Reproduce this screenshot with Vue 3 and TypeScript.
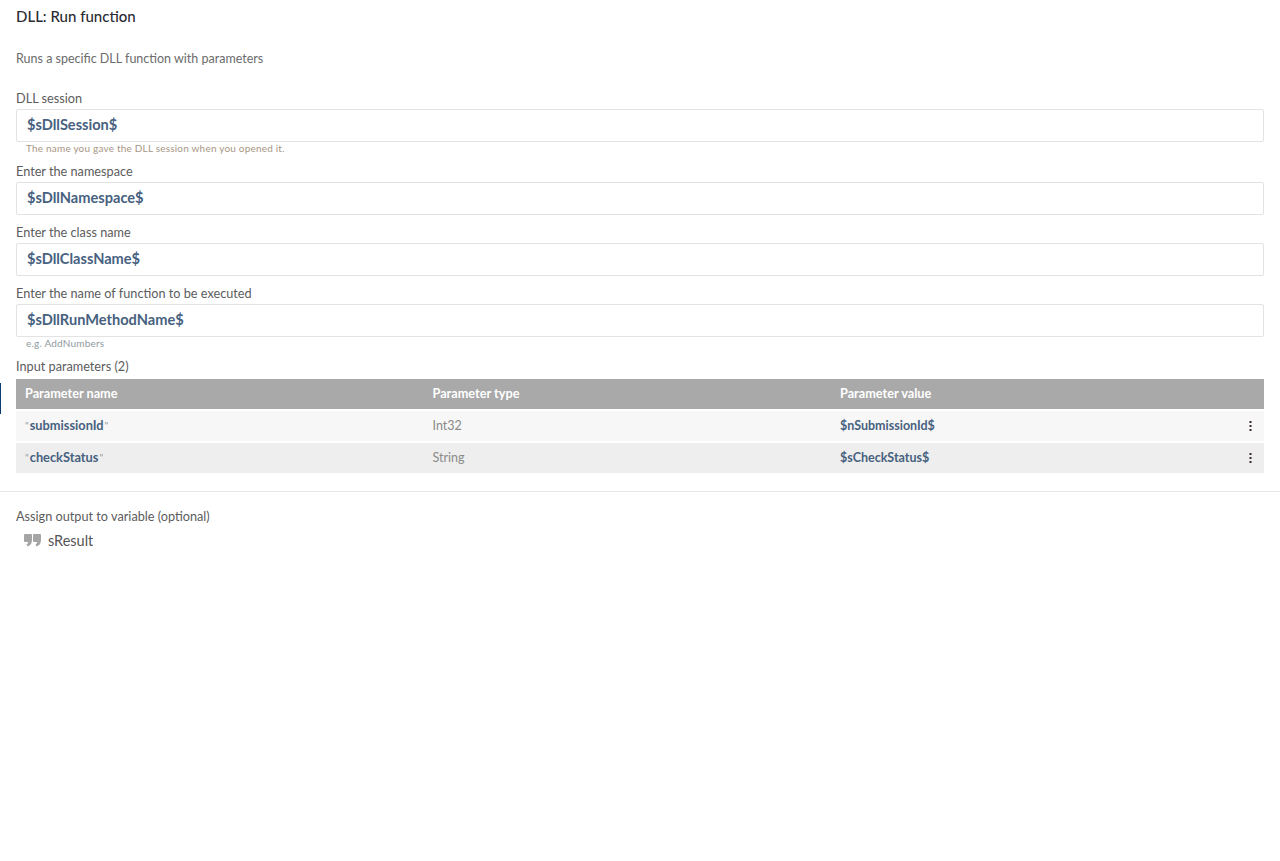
<script setup lang="ts">
interface Param { name: string; type: string; value: string }
const fields = [
  { label: 'DLL session', value: '$sDllSession$', hint: 'The name you gave the DLL session when you opened it.', cls: 'hint-tan' },
  { label: 'Enter the namespace', value: '$sDllNamespace$', hint: '', cls: '' },
  { label: 'Enter the class name', value: '$sDllClassName$', hint: '', cls: '' },
  { label: 'Enter the name of function to be executed', value: '$sDllRunMethodName$', hint: 'e.g. AddNumbers', cls: 'hint-grey' }
]
const params: Param[] = [
  { name: 'submissionId', type: 'Int32', value: '$nSubmissionId$' },
  { name: 'checkStatus', type: 'String', value: '$sCheckStatus$' }
]
</script>

<template>
  <div class="page">
    <div class="accent"></div>
    <div class="top">
      <h1 class="title">DLL: Run function</h1>
      <p class="desc">Runs a specific DLL function with parameters</p>
      <div class="fields">
        <div v-for="f in fields" :key="f.label" class="field">
          <label class="label">{{ f.label }}</label>
          <div class="input">{{ f.value }}</div>
          <div v-if="f.hint" class="hint" :class="f.cls">{{ f.hint }}</div>
        </div>
      </div>
      <div class="label">Input parameters (2)</div>
      <div class="table">
        <div class="row head">
          <div>Parameter name</div>
          <div>Parameter type</div>
          <div>Parameter value</div>
          <div></div>
        </div>
        <div v-for="p in params" :key="p.name" class="row body">
          <div class="name"><span class="q open">"</span>{{ p.name }}<span class="q close">"</span></div>
          <div class="type">{{ p.type }}</div>
          <div class="value">{{ p.value }}</div>
          <div class="menu">
            <svg width="3" height="11" viewBox="0 0 3 11"><rect x="0.5" y="0" width="2" height="2" /><rect x="0.5" y="4" width="2" height="2" /><rect x="0.5" y="8" width="2" height="2" /></svg>
          </div>
        </div>
      </div>
    </div>
    <div class="bottom">
      <div class="label">Assign output to variable (optional)</div>
      <div class="output">
        <svg class="quote" width="17" height="13" viewBox="0 0 17 13">
          <path d="M0 1Q0 0 1 0H7Q8 0 8 1V6Q8 11 3.500 12.500L2.500 10.500Q4 9.500 4.200 8H1Q0 8 0 7Z" />
          <path d="M9 1Q9 0 10 0H16Q17 0 17 1V6Q17 11 12.500 12.500L11.500 10.500Q13 9.500 13.200 8H10Q9 8 9 7Z" />
        </svg>
        <span>sResult</span>
      </div>
    </div>
  </div>
</template>

<style>
html, body { margin: 0; background: #fff; }
</style>

<style scoped>
.page {
  position: relative;
  min-height: 861px;
  font-family: Lato, "Open Sans", sans-serif;
  color: #555;
  font-size: 14px;
}
.accent {
  position: absolute;
  left: 0;
  top: 383px;
  width: 1px;
  height: 31px;
  background: #0d3c6e;
}
.top { padding: 7px 16px 18px; border-bottom: 1px solid #e6e6e6; }
.title {
  margin: 0;
  font-size: 15px;
  line-height: 18px;
  font-weight: 500;
  color: #2b2b33;
}
.desc {
  margin: 25px 0 0;
  font-size: 12.500px;
  line-height: 18px;
  color: #6b6b6b;
}
.fields { margin-top: 21px; display: flex; flex-direction: column; gap: 8px; margin-bottom: 8px; }
.field { display: flex; flex-direction: column; }
.label {
  font-size: 12.700px;
  line-height: 18px;
  color: #5c5c5c;
}
.input {
  box-sizing: border-box;
  height: 33px;
  border: 1px solid #e3e3e3;
  border-radius: 2px;
  padding: 0 10px;
  line-height: 29px;
  font-size: 14.600px;
  font-weight: 700;
  color: #47617f;
  margin-top: 2px;
}
.hint {
  font-size: 10px;
  line-height: 12px;
  padding-left: 10px;
  letter-spacing: 0.2px;
}
.hint-tan { color: #a89684; }
.hint-grey { color: #8f9aa3; }
.table { margin-top: 4px; display: flex; flex-direction: column; gap: 2px; }
.row {
  display: grid;
  grid-template-columns: 407.500px 407.500px 1fr 26px;
  align-items: center;
  box-sizing: border-box;
  padding: 0 0 2px 9px;
  font-size: 12.500px;
}
.head { height: 30px; background: #a9a9a9; color: #fff; font-weight: 700; font-size: 12.700px; }
.body { height: 30px; background: #f7f7f7; }
.body:last-child { background: #eeeeee; }
.name, .value { font-weight: 700; color: #47617f; }
.name { font-size: 12.800px; }
.q { font-weight: 400; color: #999; font-size: 10px; position: relative; top: -1px; }
.open { margin-right: 1px; }
.close { margin-left: 1px; }
.type { color: #8a8a8a; }
.menu { display: flex; justify-content: flex-end; padding-right: 12px; padding-top: 2px; }
.menu svg { fill: #3a2a2a; display: block; }
.bottom { padding: 15px 16px 0; }
.output {
  display: flex;
  align-items: center;
  gap: 7px;
  margin-top: 6px;
  padding-left: 8px;
  font-size: 14.500px;
  line-height: 20px;
  color: #555;
}
.quote { fill: #a5a5a5; position: relative; top: -1px; }
</style>
